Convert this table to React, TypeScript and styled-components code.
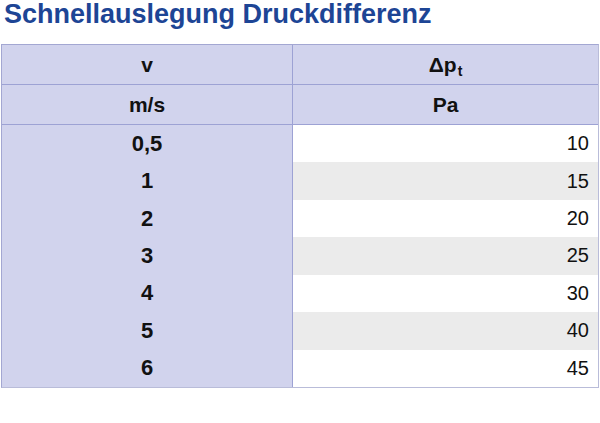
import React from "react"
import styled, { createGlobalStyle } from "styled-components"

const GlobalStyle = createGlobalStyle`
    body {
        margin: 0;
        background: #fff;
        font-family: "Liberation Sans", Arial, sans-serif;
    }
`

const rows = [
    { v: "0,5", p: "10" },
    { v: "1", p: "15" },
    { v: "2", p: "20" },
    { v: "3", p: "25" },
    { v: "4", p: "30" },
    { v: "5", p: "40" },
    { v: "6", p: "45" },
]

const App: React.FC = () => {
    return (
        <Page>
            <GlobalStyle />
            <Title>Schnellauslegung Druckdifferenz</Title>
            <Table>
                <HeadCell>v</HeadCell>
                <HeadCell $last>
                    <span>
                        Δp<Sub>t</Sub>
                    </span>
                </HeadCell>
                <HeadCell>m/s</HeadCell>
                <HeadCell $last>Pa</HeadCell>
                {rows.map((r, i) => (
                    <React.Fragment key={r.v}>
                        <KeyCell>{r.v}</KeyCell>
                        <ValueCell $striped={i % 2 === 1}>{r.p}</ValueCell>
                    </React.Fragment>
                ))}
            </Table>
        </Page>
    )
}

const Page = styled.div`
    width: 600px;
    height: 423px;
    background: #fff;
`

const Title = styled.h1`
    margin: 0;
    padding-left: 4px;
    height: 44px;
    font-size: 27px;
    line-height: 29px;
    font-weight: 700;
    color: #1d4595;
`

const Table = styled.div`
    margin-left: 1px;
    width: 598px;
    box-sizing: border-box;
    display: grid;
    grid-template-columns: 291px 1fr;
    grid-template-rows: 40px 40px repeat(7, 37.43px);
    border: 1px solid #a3a7d2;
    border-bottom-color: #b9bcd9;
    border-right-color: #b9bcd9;
`

const HeadCell = styled.div<{ $last?: boolean }>`
    display: flex;
    align-items: center;
    justify-content: center;
    background: #d1d3ed;
    border-bottom: 1px solid #9da2d4;
    border-right: ${(p) => (p.$last ? "none" : "1px solid #9da2d4")};
    font-size: 21px;
    font-weight: 700;
    color: #111;
`

const Sub = styled.sub`
    font-size: 14px;
    vertical-align: -4px;
    line-height: 0;
    margin-left: 1px;
`

const KeyCell = styled.div`
    display: flex;
    align-items: center;
    justify-content: center;
    background: #d1d3ed;
    border-right: 1px solid #9da2d4;
    font-size: 22px;
    font-weight: 700;
    color: #111;
`

const ValueCell = styled.div<{ $striped: boolean }>`
    display: flex;
    align-items: center;
    justify-content: flex-end;
    padding-right: 9px;
    background: ${(p) => (p.$striped ? "#ebebeb" : "#fff")};
    font-size: 20px;
    color: #111;
`

export default App
